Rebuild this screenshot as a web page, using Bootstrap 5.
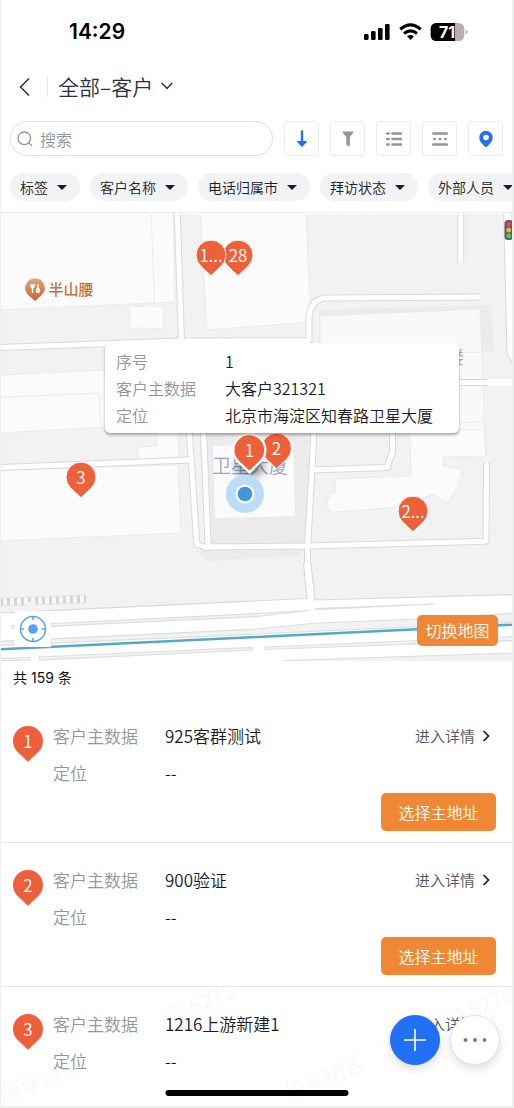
<!DOCTYPE html>
<html lang="zh-CN">
<head>
<meta charset="utf-8">
<meta name="viewport" content="width=device-width, initial-scale=1">
<title>全部–客户</title>
<link rel="stylesheet" href="https://cdn.jsdelivr.net/npm/bootstrap@5.3.0/dist/css/bootstrap.min.css">
<style>
body{font-family:"Noto Sans CJK SC",sans-serif;font-size:17px;font-weight:350;color:#181c25;background:#efeff1}
button,.btn,input.form-control{font-weight:350}
.screen{background:#fff;min-height:calc(100vh - 2px);margin:0 2px 2px 1px}
.status-bar{height:64px;padding:0 43px 0 68px;font-family:Inter,sans-serif;color:#000}
.clock{font-size:21px;line-height:24px;font-weight:600}
.title-bar{height:46px;padding-left:17px}
.title-bar .btn{border:0;padding:0;color:#2a303d}
.rule{width:1px;height:20px;background:#e3e4e8;margin:0 10px 0 16px}
.view-name{font-size:21px;line-height:30px;padding-bottom:2px!important}
.tools{padding:11px 9px 0;gap:11px}
.search-box{height:35px;border:1px solid #dee1e8;border-radius:18px;padding:0 6px}
.search-box input{font-size:16px;line-height:24px;padding:0 0 0 7px;border:0;background:none;min-width:0}
.search-box input:focus{box-shadow:none;background:none}
.search-box input::placeholder{color:#91959e}
.tool-btn{width:35px;height:35px;border:1px solid #ececf0;border-radius:3px;padding:0;background:#fff}
.chips{padding:17px 0 11px 9px;gap:10px;overflow:hidden;border-bottom:1px solid #ebebed}
.chip{height:28px;border:0;border-radius:14px;background:#f2f3f5;color:#181c25;font-size:14px;line-height:28px;padding:0 13px 0 10px;white-space:nowrap;gap:9px}
.chip::after{content:"";border:5px solid transparent;border-top-color:#181c25;border-bottom:0}
.map-wrap{padding-top:1px}
.map-wrap>svg{width:100%}
.info{left:104px;right:53px;top:130px;padding:5px 11px 4px;border-radius:5px;background:#fff;box-shadow:0 2px 3px #0005;font-size:16px;line-height:27px}
.info dt,.info dd{font-weight:inherit;margin:0}
.info dt{width:109px;color:#91959e}
.locate{left:14px;bottom:14px;width:36px;height:36px;background:#fff;border:0;padding:0}
.btn-amber{background:#f08734;color:#fff;border:0;border-radius:5px;font-size:16px;padding:0}
.btn-amber:hover{background:#e07824;color:#fff}
.swap{right:14px;bottom:15px;width:81px;height:31px;line-height:31px}
.total{font:14px/20px Inter,"Noto Sans CJK SC",sans-serif;padding:7px 12px 11px;color:#111}
.record{padding:18px 16px 11px 12px;border-bottom:1px solid #e9e9ec}
.record:last-child{border-bottom:0;padding-bottom:0}
.record .pin{width:30px;height:36px;margin-top:9px}
.fields{margin-left:10px;line-height:37px}
.fields dt,.fields dd{font-weight:inherit;margin:0}
.fields dt{width:112px;color:#91959e}
.go{font-size:15px;line-height:37px;color:#545861;gap:7px;padding-right:6px}
.pick{width:115px;height:38px;line-height:38px;margin-top:2px}
.fabs{right:12px;bottom:41px;gap:10px;z-index:2}
.fab{width:50px;height:50px;border-radius:50%;border:1px solid #dee1e8;background:#fff;padding:0;box-shadow:0 4px 10px #0002}
.fab-new{background:#2270f5;border-color:#2270f5}
.home-bar{width:183px;height:6px;border-radius:3px;background:#000;bottom:10px;left:50%;transform:translateX(-50%)}
.watermark{right:0;bottom:0;left:0;width:100%}
.pins text{font-size:17px;fill:#fff;text-anchor:middle}
</style>
</head>
<body>
<svg width="0" height="0" class="position-absolute" aria-hidden="true">
  <defs>
    <path id="drop" d="M0 20.7L-10.4 10.9A15 15 0 1 1 10.4 10.9Z" fill="#ed603a"/>
    <path id="next" d="M1.5 1L6.5 6L1.5 11" fill="none" stroke="#181c25" stroke-width="1.7"/>
  </defs>
</svg>
<div class="screen position-relative overflow-hidden">
  <header>
    <div class="status-bar d-flex align-items-center justify-content-between">
      <span class="clock">14:29</span>
      <svg width="106" height="20" viewBox="363 21 106 20" aria-label="信号、无线网络、电量 71">
        <g><rect x="364" y="33" width="4.6" height="6" rx="1.3"/><rect x="371" y="30" width="4.6" height="9" rx="1.3"/><rect x="378" y="27" width="4.6" height="12" rx="1.3"/><rect x="385" y="23" width="4.6" height="16" rx="1.3"/></g>
        <g fill="none" stroke="#000" stroke-width="3.1"><path d="M400.3 28.2Q410.500 19.600 420.700 28.200"/><path d="M404 32.500Q410.500 27.400 417 32.500"/></g>
        <path d="M407 35.300Q410.500 32.600 414 35.300L410.500 39Z"/>
        <rect x="430.700" y="22" width="33.600" height="18" rx="5.500" fill="#b2b2b4"/>
        <path d="M455 22v18h-18.800a5.500 5.500 0 0 1-5.500-5.500v-7a5.500 5.500 0 0 1 5.500-5.500Z"/>
        <path d="M465.600 28.500Q467.800 29.500 467.800 31T465.600 33.500Z" fill="#b2b2b4"/>
        <text x="447" y="36.500" font-size="16" font-weight="700" fill="#fff" text-anchor="middle">71</text>
      </svg>
    </div>
    <div class="title-bar d-flex align-items-center">
      <button class="btn d-flex" type="button" aria-label="返回"><svg width="13" height="20" fill="none" stroke="#2a303d" stroke-width="1.500"><path d="M11 1.500L2.500 10L11 18.500"/></svg></button>
      <span class="rule"></span>
      <button class="btn view-name d-flex align-items-center gap-2" type="button">全部–客户<svg width="12" height="8" fill="none" stroke="#2a303d" stroke-width="1.500"><path d="M.7 1L6 6.500L11.300 1"/></svg></button>
    </div>
    <div class="tools d-flex">
      <label class="search-box d-flex align-items-center flex-grow-1" for="q">
        <svg class="flex-shrink-0" width="16" height="16" fill="none" stroke="#91959e" stroke-width="1.300"><circle cx="7.300" cy="7.300" r="6.300"/><path d="M11.800 11.800L15 15"/></svg>
        <input class="form-control shadow-none" id="q" type="search" placeholder="搜索" aria-label="搜索">
      </label>
      <button class="tool-btn" type="button" aria-label="排序"><svg class="d-block mx-auto" width="18" height="18"><path d="M9 1.500V12" stroke="#2270f5" stroke-width="2.400" stroke-linecap="round"/><path d="M4.300 11h9.400q.8.300.2 1L9.600 16.400q-.6.500-1.200 0L4.100 12q-.6-.7.200-1Z" fill="#2270f5"/></svg></button>
      <button class="tool-btn" type="button" aria-label="筛选"><svg class="d-block mx-auto" width="18" height="18" fill="#91959e"><path d="M4 1.500h10q.7.500.1 1.200L10.800 7v9.600L7.300 15V7L3.900 2.700Q3.300 2 4 1.500Z"/></svg></button>
      <button class="tool-btn" type="button" aria-label="列表"><svg class="d-block mx-auto" width="18" height="18" stroke="#91959e" stroke-width="2.600" stroke-linecap="round"><path d="M2.300 3.500h1.400M7.500 3.500h8.500M2.300 9h1.400M7.500 9h8.500M2.300 14.500h1.400M7.500 14.500h8.500"/></svg></button>
      <button class="tool-btn" type="button" aria-label="分组"><svg class="d-block mx-auto" width="18" height="18" stroke="#91959e" stroke-width="2.400" stroke-linecap="round"><path d="M2.200 3.500h13.600M3.200 9h.6M8.700 9h.6M14.200 9h.6M2.200 14.500h13.600"/></svg></button>
      <button class="tool-btn" type="button" aria-label="地图"><svg class="d-block mx-auto" width="18" height="18"><path fill="#2270f5" fill-rule="evenodd" d="M9 .7A6.700 6.700 0 0 0 2.300 7.400C2.300 11.500 6 14.500 8.200 16.800Q9 17.500 9.800 16.800C12 14.500 15.700 11.500 15.700 7.400A6.700 6.700 0 0 0 9 .7ZM9 4.700a2.800 2.800 0 1 1 0 5.600a2.800 2.800 0 0 1 0-5.600Z"/></svg></button>
    </div>
    <div class="chips d-flex">
      <button class="chip d-flex flex-shrink-0 align-items-center" type="button">标签</button>
      <button class="chip d-flex flex-shrink-0 align-items-center" type="button">客户名称</button>
      <button class="chip d-flex flex-shrink-0 align-items-center" type="button">电话归属市</button>
      <button class="chip d-flex flex-shrink-0 align-items-center" type="button">拜访状态</button>
      <button class="chip d-flex flex-shrink-0 align-items-center" type="button">外部人员</button>
    </div>
  </header>
  <main>
    <section class="map-wrap position-relative">
      <svg class="d-block" viewBox="1 214 511 447" role="img" aria-label="客户地图">
        <defs>
          <linearGradient id="poi" x2="0" y2="1"><stop stop-color="#e5a579"/><stop offset="1" stop-color="#c2662f"/></linearGradient>
          <filter id="soft" x="-50%" y="-50%" width="200%" height="200%"><feGaussianBlur stdDeviation="4"/></filter>
          <g id="roads" fill="none" stroke-linejoin="round">
            <path d="M177 205L181.500 341L189.300 433L192 470L196.700 544L208 548.500"/>
            <path d="M203.500 430L208.200 547L307 546L486 541.300L486.500 462.500"/>
            <path d="M0 347.500L181 341L309 340.500V318Q310 298 328 298L480 297"/>
            <path d="M0 467.500L190 460"/>
            <path d="M314 430L312 470L307.500 547V564M312 470L387 467.500L392.500 452V430"/>
            <path d="M460.700 205V262.500M458 382.500H514"/>
          </g>
        </defs>
        <path fill="#f2f2f2" d="M0 213h514v449H0Z"/>
        <g fill="#fbfbfb" stroke="#ebebeb" stroke-width="1">
          <path d="M-2 210H173L175 302L-2 310ZM151 210L154.500 303M130 306.500L163 306V328.500L130 328Z"/>
          <path d="M200 210H306L311 322L207 330ZM-2 375L105 370L109 427L-2 433ZM-2 397.500L99 393L101 427"/>
          <path d="M138 447L157 446V430H178L179 458L138 459ZM-2 470L178 465L181 533L-2 541Z"/>
          <path fill="#ebebeb" stroke="none" d="M319 310L492 305L493 351L319 355ZM204 430H312L307 545H209ZM197 551L208 561L299 556L302 550Z"/>
          <path fill="#f9f9f9" d="M320 316L480 309L485 435H320ZM457 353L482 352M457 423L485 422"/>
          <path d="M213 446L293 443L295 516L215 518Z" stroke="none"/>
          <path d="M410 430H484L486 456L443 457V466L462 469C460 484 454 496 445 503L434 494.500L390 508L334 512C325 512 324 496 336 492L334.500 479L411 476Z"/>
        </g>
        <use href="#roads" stroke="#d9d9d9" stroke-width="7"/>
        <use href="#roads" stroke="#fff" stroke-width="5"/>
        <path d="M507.500 205L511 352L518 364" fill="none" stroke="#d9d9d9" stroke-width="9"/>
        <path d="M507.500 205L511 352L518 364" fill="none" stroke="#fff" stroke-width="7"/>
        <path d="M488 382.500H514" stroke="#fff" stroke-width="7"/>
        <path d="M303.500 563L307 598.500L0 613V662H514V594.500L315 600L311 563Z" fill="#fff"/>
        <path d="M303.500 563L307 598.500L0 613M311 563L315 600L514 594.500" fill="none" stroke="#d9d9d9" stroke-width="1.200"/>
        <path d="M0 602L86 599" stroke="#e6e6e6" stroke-width="9"/><path d="M0 602L86 599" stroke="#d3d3d3" stroke-width="7"/><path d="M3 601.800L86 599" stroke="#f8f8f8" stroke-width="7" stroke-dasharray="4 3"/>
        <path d="M31 602V612" stroke="#f2f2f2" stroke-width="10"/>
        <g fill="#f2f2f2" stroke="#dedede" stroke-width="1.200">
          <path d="M12 625.500L257 613.500L309 610.500L257 616.500L12 628ZM316 608.500L434 604L316 609.700Z"/>
          <path d="M-2 641.500L257 629L317 623L417 619L516 613V622L257 634L-2 645.500Z"/>
          <path d="M39 657L252 647.500V650L39 660ZM-2 658.500L30 657.500V660L-2 661ZM265 647L516 636.500V640.500L265 649.500ZM285 660.500L516 653V665H285Z"/>
        </g>
        <path d="M0 649.300L257 637L514 624.600" stroke="#50abc8" stroke-width="2.400"/>
        <path d="M35 278.500a9.500 9.500 0 0 1 7 16.200L35 301L28 294.700A9.500 9.500 0 0 1 35 278.500Z" fill="url(#poi)"/>
        <path d="M31 284v3q1.500 1.500 3 0v-3M32.500 284v9M38 284v4" fill="none" stroke="#fff" stroke-width="1.300"/><ellipse cx="38" cy="290.500" rx="2" ry="2.800" fill="#fff"/>
        <text x="48.500" y="295" font-size="15" font-weight="500" fill="#c8703c">半山腰</text>
        <rect x="504.500" y="220" width="8.500" height="20" rx="3.500" fill="#565a6a"/><circle cx="508.700" cy="224.300" r="2.500" fill="#df4c45"/><circle cx="508.700" cy="230" r="2.500" fill="#e6b247"/><circle cx="508.700" cy="235.700" r="2.500" fill="#55b957"/>
        <text x="446" y="364" font-size="18" fill="#a4abc0">楼</text>
        <text x="212" y="472.500" font-size="19" fill="#9aa5c6">卫星大厦</text>
        <ellipse cx="250" cy="467" rx="14" ry="10" fill="#0006" filter="url(#soft)"/>
        <circle cx="245" cy="494" r="19" fill="#bbdcf4"/><circle cx="245" cy="494" r="9.600" fill="#fff"/><circle cx="245" cy="494" r="7.300" fill="#4097da"/>
        <g class="pins" stroke="none">
          <g transform="translate(238 255)"><use href="#drop" stroke="#fff"/><text y="7">28</text></g>
          <g transform="translate(211 255)"><use href="#drop" stroke="#fff"/><text y="7">1...</text></g>
          <g transform="translate(276.500 448)"><use href="#drop" stroke="#fff"/><text y="7">2</text></g>
          <g transform="translate(249.300 450)"><use href="#drop" transform="scale(1.070)" stroke="#fff" stroke-width="2.200"/><text y="7">1</text></g>
          <g transform="translate(81 477)"><use href="#drop" stroke="#fff"/><text y="7">3</text></g>
          <g transform="translate(413 511)"><use href="#drop" stroke="#fff"/><text y="7">2...</text></g>
        </g>
      </svg>
      <dl class="info position-absolute mb-0">
        <div class="d-flex"><dt>序号</dt><dd>1</dd></div>
        <div class="d-flex"><dt>客户主数据</dt><dd>大客户321321</dd></div>
        <div class="d-flex"><dt>定位</dt><dd>北京市海淀区知春路卫星大厦</dd></div>
      </dl>
      <button class="locate position-absolute" type="button" aria-label="定位到当前位置"><svg class="d-block mx-auto" width="28" height="28" fill="none" stroke="#579ff6" stroke-width="1.500"><circle cx="14" cy="14" r="12.500"/><circle cx="14" cy="14" r="4.800" fill="#579ff6" stroke="none"/><path d="M14 1v4M14 23v4M1 14h4M23 14h4"/></svg></button>
      <button class="btn btn-amber swap position-absolute" type="button">切换地图</button>
    </section>
    <div class="total">共 159 条</div>
    <section class="position-relative">
      <article class="record">
        <div class="d-flex">
          <svg class="pin pins" viewBox="-15 -15 30 36"><use href="#drop"/><text y="7">1</text></svg>
          <dl class="fields flex-grow-1 mb-0"><div class="d-flex"><dt>客户主数据</dt><dd>925客群测试</dd></div><div class="d-flex"><dt>定位</dt><dd>--</dd></div></dl>
          <a class="go d-flex align-items-center align-self-start text-decoration-none" href="#">进入详情<svg width="8" height="12"><use href="#next"/></svg></a>
        </div>
        <button class="btn btn-amber pick d-block ms-auto" type="button">选择主地址</button>
      </article>
      <article class="record">
        <div class="d-flex">
          <svg class="pin pins" viewBox="-15 -15 30 36"><use href="#drop"/><text y="7">2</text></svg>
          <dl class="fields flex-grow-1 mb-0"><div class="d-flex"><dt>客户主数据</dt><dd>900验证</dd></div><div class="d-flex"><dt>定位</dt><dd>--</dd></div></dl>
          <a class="go d-flex align-items-center align-self-start text-decoration-none" href="#">进入详情<svg width="8" height="12"><use href="#next"/></svg></a>
        </div>
        <button class="btn btn-amber pick d-block ms-auto" type="button">选择主地址</button>
      </article>
      <article class="record">
        <div class="d-flex">
          <svg class="pin pins" viewBox="-15 -15 30 36"><use href="#drop"/><text y="7">3</text></svg>
          <dl class="fields flex-grow-1 mb-0"><div class="d-flex"><dt>客户主数据</dt><dd>1216上游新建1</dd></div><div class="d-flex"><dt>定位</dt><dd>--</dd></div></dl>
          <a class="go d-flex align-items-center align-self-start text-decoration-none" href="#">进入详情<svg width="8" height="12"><use href="#next"/></svg></a>
        </div>
      </article>
    </section>
  </main>
  <svg class="watermark position-absolute pe-none" viewBox="1 980 511 126" aria-hidden="true">
    <defs><clipPath id="cutTop"><path d="M165 980h90v29h-90Z"/></clipPath><clipPath id="cutLeft"><path d="M0 1073h80v33H0Z"/></clipPath></defs>
    <g fill="#000" fill-opacity=".05" font-size="21">
      <g clip-path="url(#cutTop)"><text transform="translate(151 1034) rotate(-24)">刘丹 5275</text></g>
      <g clip-path="url(#cutLeft)"><text transform="translate(4 1104) rotate(-24)">纷享销客</text></g>
      <text transform="translate(430 1038) rotate(-24)">刘丹 5275</text>
      <text transform="translate(289 1102) rotate(-24)">纷享销客</text>
    </g>
  </svg>
  <div class="fabs position-absolute d-flex">
    <button class="fab fab-new" type="button" aria-label="新建"><svg class="d-block mx-auto" width="24" height="24" stroke="#fff" stroke-width="1.600"><path d="M12 1v22M1 12h22"/></svg></button>
    <button class="fab" type="button" aria-label="更多"><svg class="d-block mx-auto" width="24" height="6" fill="#737c8c"><circle cx="2.500" cy="3" r="2"/><circle cx="12" cy="3" r="2"/><circle cx="21.500" cy="3" r="2"/></svg></button>
  </div>
  <div class="home-bar position-absolute"></div>
</div>
<script src="https://cdn.jsdelivr.net/npm/bootstrap@5.3.0/dist/js/bootstrap.bundle.min.js"></script>
</body>
</html>
